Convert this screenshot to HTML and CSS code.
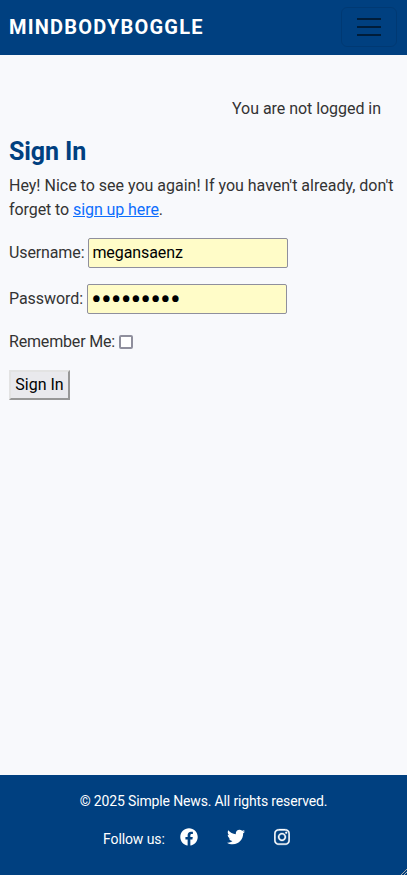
FILE: index.html
```html
<!DOCTYPE html>
<html lang="en">
<head>
<meta charset="utf-8">
<meta name="viewport" content="width=device-width, initial-scale=1">
<title>Sign In</title>
<link rel="stylesheet" href="styles.css">
</head>
<body>
<header class="navbar">
  <a class="brand" href="#">MindBodyBoggle</a>
  <button class="toggler" type="button" aria-label="Toggle navigation">
    <svg viewBox="0 0 30 30" width="30" height="30"><path stroke="rgba(0,0,0,.55)" stroke-linecap="butt" stroke-width="2" d="M3 7h24M3 15h24M3 23h24"/></svg>
  </button>
</header>
<main class="content">
  <p class="status">You are not logged in</p>
  <h1 class="title">Sign In</h1>
  <p class="intro">Hey! Nice to see you again! If you haven't already, don't <span class="narrow">forget to <a href="#">sign up here</a>.</span></p>
  <form class="form">
    <div class="field"><label for="user">Username:</label><input class="input" id="user" type="text" value="megansaenz"></div>
    <div class="field password-field"><label for="pass">Password:</label><input class="input password" id="pass" type="password" value="*********"></div>
    <div class="field remember"><label for="rem">Remember Me:</label><input class="check" id="rem" type="checkbox"></div>
    <button class="submit" type="button">Sign In</button>
  </form>
</main>
<footer class="footer">
  <p class="copyright">© 2025 Simple News. All rights reserved.</p>
  <div class="follow">
    <span class="follow-label">Follow us:</span>
    <a href="#" class="social" aria-label="Facebook"><svg viewBox="0 0 512 512" width="18" height="18"><path d="M504 256C504 119 393 8 256 8S8 119 8 256c0 123.78 90.69 226.38 209.25 245V327.69h-63V256h63v-54.64c0-62.15 37-96.48 93.67-96.48 27.14 0 55.52 4.84 55.52 4.84v61h-31.28c-30.8 0-40.41 19.12-40.41 38.73V256h68.78l-11 71.69h-57.78V501C413.31 482.38 504 379.78 504 256z"/></svg></a>
    <a href="#" class="social" aria-label="Twitter"><svg viewBox="0 0 512 512" width="18" height="18"><path d="M459.37 151.716c.325 4.548.325 9.097.325 13.645 0 138.72-105.583 298.558-298.558 298.558-59.452 0-114.68-17.219-161.137-47.106 8.447.974 16.568 1.299 25.34 1.299 49.055 0 94.213-16.568 130.274-44.832-46.132-.975-84.792-31.188-98.112-72.772 6.498.974 12.995 1.624 19.818 1.624 9.421 0 18.843-1.3 27.614-3.573-48.081-9.747-84.143-51.98-84.143-102.985v-1.299c13.969 7.797 30.214 12.67 47.431 13.319-28.264-18.843-46.781-51.005-46.781-87.391 0-19.492 5.197-37.36 14.294-52.954 51.655 63.675 129.3 105.258 216.365 109.807-1.624-7.797-2.599-15.918-2.599-24.04 0-57.828 46.782-104.934 104.934-104.934 30.213 0 57.502 12.67 76.67 33.137 23.715-4.548 46.456-13.32 66.599-25.34-7.798 24.366-24.366 44.833-46.132 57.827 21.117-2.273 41.584-8.122 60.426-16.243-14.292 20.791-32.161 39.308-52.628 54.253z"/></svg></a>
    <a href="#" class="social" aria-label="Instagram"><svg viewBox="0 0 448 512" width="16" height="18"><path stroke="#fff" stroke-width="10" d="M224.1 141c-63.6 0-114.9 51.3-114.9 114.9s51.3 114.9 114.9 114.9S339 319.5 339 255.9 287.7 141 224.1 141zm0 189.6c-41.1 0-74.7-33.5-74.7-74.7s33.5-74.7 74.7-74.7 74.7 33.5 74.7 74.7-33.6 74.7-74.7 74.7zm146.4-194.3c0 14.9-12 26.8-26.8 26.8-14.9 0-26.8-12-26.8-26.8s12-26.8 26.8-26.8 26.8 12 26.8 26.8zm76.1 27.2c-1.7-35.9-9.9-67.7-36.2-93.9-26.2-26.2-58-34.4-93.9-36.2-37-2.1-147.9-2.1-184.9 0-35.8 1.7-67.6 9.9-93.9 36.1s-34.4 58-36.2 93.9c-2.1 37-2.1 147.9 0 184.9 1.7 35.9 9.9 67.7 36.2 93.9s58 34.4 93.9 36.2c37 2.1 147.9 2.1 184.9 0 35.9-1.7 67.7-9.9 93.9-36.2 26.2-26.2 34.4-58 36.2-93.9 2.1-37 2.1-147.8 0-184.8zM398.8 388c-7.8 19.6-22.9 34.7-42.6 42.6-29.5 11.7-99.5 9-132.1 9s-102.7 2.6-132.1-9c-19.6-7.8-34.7-22.9-42.6-42.6-11.7-29.5-9-99.5-9-132.1s-2.6-102.7 9-132.1c7.8-19.6 22.9-34.7 42.6-42.6 29.5-11.7 99.5-9 132.1-9s102.7-2.6 132.1 9c19.6 7.8 34.7 22.9 42.6 42.6 11.7 29.5 9 99.5 9 132.1s2.7 102.7-9 132.1z"/></svg></a>
  </div>
  <svg class="grip" viewBox="0 0 6 6" width="6" height="6"><path d="M0 6L6 0M3 6L6 3" stroke="#aaa" stroke-width="1"/></svg>
</footer>
</body>
</html>
```
FILE: styles.css
```css
* { box-sizing: border-box; }
body {
  margin: 0;
  height: 875px;
  display: flex;
  flex-direction: column;
  overflow: hidden;
  background: #f8f9fc;
  color: #333;
  font: 16px/24px Roboto, sans-serif;
}
p, h1 { margin: 0; }
.navbar {
  height: 55px;
  padding: 0 10px 1px 9px;
  display: flex;
  align-items: center;
  justify-content: space-between;
  background: #004080;
}
.brand {
  color: #fff;
  font-size: 20px;
  font-weight: 700;
  letter-spacing: 1.2px;
  text-transform: uppercase;
  text-decoration: none;
}
.toggler {
  width: 56px;
  height: 40px;
  padding: 4px 12px;
  border: 1px solid rgba(0, 0, 0, .1);
  border-radius: 6px;
  background: none;
}
.toggler svg { display: block; }
.content { flex: 1; padding: 42px 9px 0; }
.status { padding-right: 17px; text-align: right; letter-spacing: -.04px; }
.title {
  margin-top: 16px;
  color: #004080;
  font-size: 25px;
  line-height: 30px;
  font-weight: 700;
  letter-spacing: -.1px;
}
.intro { margin-top: 7px; }
.intro a { color: #0d6efd; }
.narrow { letter-spacing: -.08px; }
.form { margin-top: 16px; }
.field {
  display: flex;
  align-items: center;
  gap: 4px;
  height: 30px;
  margin-bottom: 16px;
  letter-spacing: -.12px;
}
.password-field { letter-spacing: -.05px; }
.input {
  width: 200px;
  height: 30px;
  padding: 0 3px 2px;
  border: 1px solid #8f8f9d;
  border-radius: 2px;
  background: #fffcc8;
  color: #000;
  font: inherit;
  letter-spacing: -.08px;
}
.password { padding-bottom: 0; font-size: 32px; letter-spacing: -.95px; }
.remember { height: 24px; margin-bottom: 16px; letter-spacing: -.17px; }
.check {
  appearance: none;
  width: 14px;
  height: 14px;
  margin: 0;
  border: 2px solid #8f8f9d;
  border-radius: 2px;
  background: #fff;
}
.submit {
  width: 61px;
  height: 30px;
  padding: 0;
  border: 2px solid;
  border-color: #e3e3e3 #979797 #979797 #e3e3e3;
  background: #e9e9ed;
  color: #000;
  font: inherit;
}
.footer {
  position: relative;
  height: 100px;
  padding-top: 16px;
  background: #004080;
  color: #fff;
  font-size: 14px;
  line-height: 21px;
}
.copyright { text-align: center; letter-spacing: -.15px; }
.follow {
  display: flex;
  align-items: flex-start;
  margin-top: 16px;
  padding-left: 103px;
}
.follow-label { width: 77px; padding-top: 1px; letter-spacing: -.1px; }
.social { width: 47px; color: #fff; }
.social svg { display: block; fill: currentColor; }
.grip { position: absolute; right: 0; bottom: 0; }
```
